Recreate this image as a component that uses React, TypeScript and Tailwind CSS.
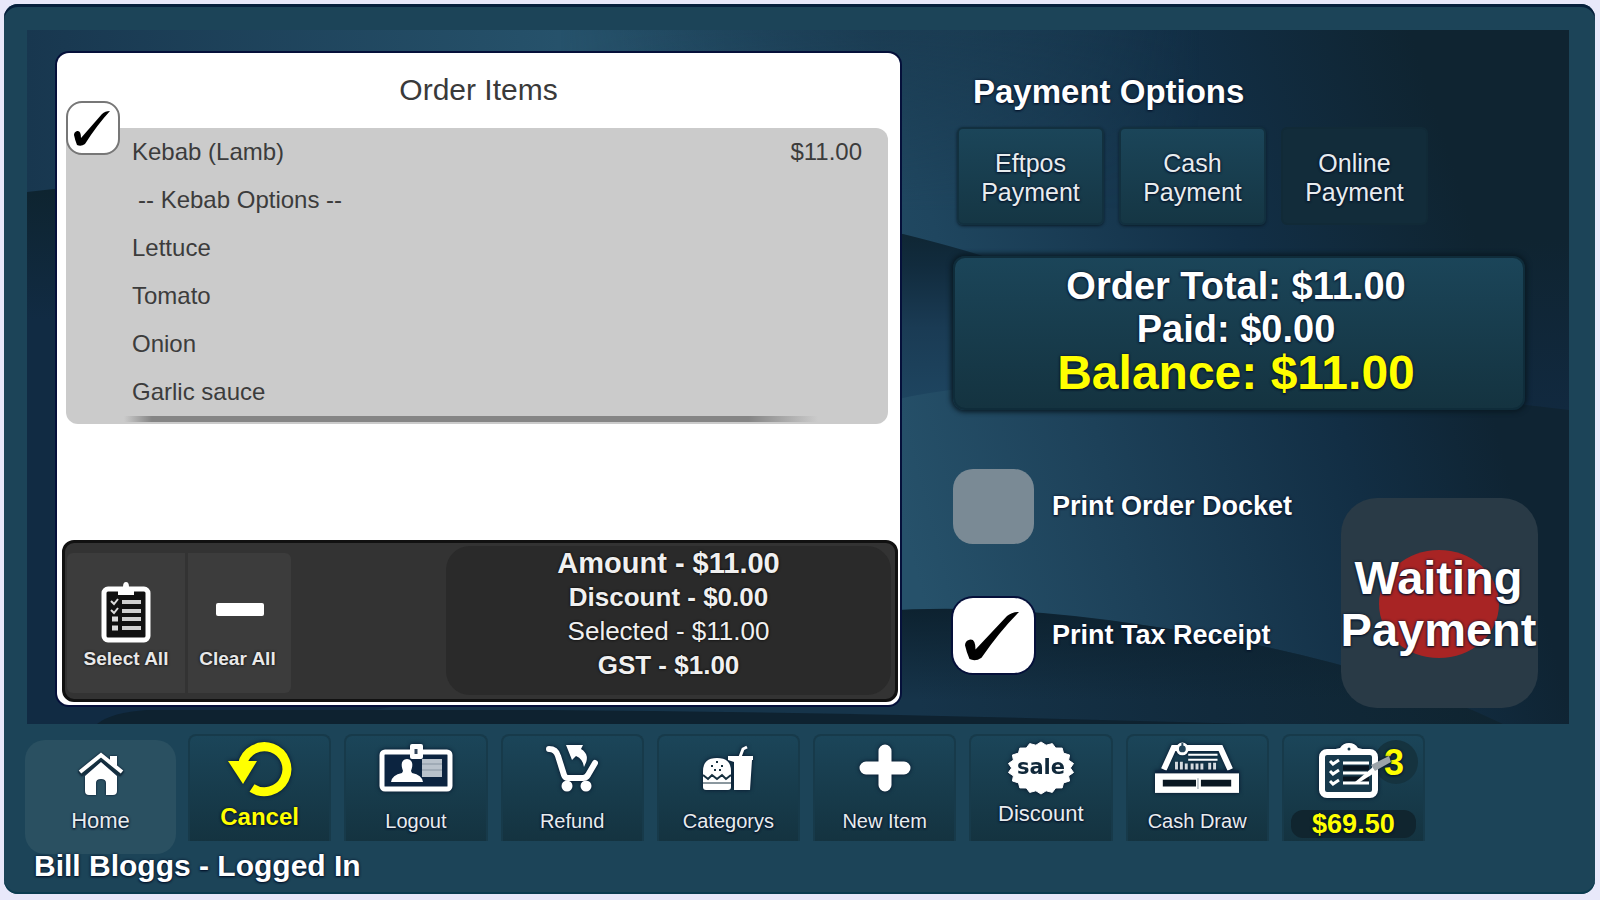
import React, { useState } from 'react';

const TEXT_GLOW = '[text-shadow:0_0_3px_#04122a,0_1px_2px_#04122a]';

const ORDER_ROWS = [
  { id: 'kebab', label: 'Kebab (Lamb)', price: '$11.00' },
  { id: 'options', label: '-- Kebab Options --', heading: true },
  { id: 'lettuce', label: 'Lettuce' },
  { id: 'tomato', label: 'Tomato' },
  { id: 'onion', label: 'Onion' },
  { id: 'garlic', label: 'Garlic sauce' },
];

const PAYMENT_TYPES = [
  { id: 'eftpos', label: 'Eftpos', enabled: true },
  { id: 'cash', label: 'Cash', enabled: true },
  { id: 'online', label: 'Online', enabled: false },
];

/* ---------- Icons ---------- */

const HomeIcon = () => (
  <svg width="46" height="44" viewBox="0 0 46 44" fill="#fff">
    <path d="M32 4h7v12l-7-6z" />
    <path d="M7 24 23 10l16 14v15q0 4-4 4h-7V31q0-4-5-4t-5 4v12h-7q-4 0-4-4z" />
    <path d="M2 22 23 5l21 17" fill="none" stroke="#16303f" strokeWidth="6" />
    <path d="M2 20 23 3l21 17" fill="none" stroke="#fff" strokeWidth="4" />
  </svg>
);

const CancelIcon = () => (
  <svg className="shrink-0" width="64" height="57" viewBox="0 0 64 57">
    <path d="M14.5 24A22.5 22.5 0 1 1 24 48" fill="none" stroke="#ff0" strokeWidth="9" />
    <path d="M0 21h29L15 44z" fill="#ff0" />
  </svg>
);

const LogoutIcon = () => (
  <svg width="74" height="48" viewBox="0 0 74 48">
    <rect x="3" y="8" width="68" height="37" rx="3" fill="#0c2440" stroke="#fff" strokeWidth="5" />
    <path d="M12 38q1-7 11-9l1-2q-4-11 4-12 8 1 4 12l1 2q10 2 11 9z" fill="#fff" />
    <rect x="43" y="15" width="20" height="18" fill="#b9c2cb" />
    <path d="M43 20h20M43 26h20" stroke="#8794a1" strokeWidth="1" />
    <rect x="31" y="0" width="13" height="15" rx="2" fill="#fff" />
    <path d="M37 5v5" stroke="#33465c" strokeWidth="3" />
  </svg>
);

const RefundIcon = () => (
  <svg width="52" height="47" viewBox="0 0 52 47">
    <path
      d="M3 4q7 0 9 7l6 19q1 3 4 3h15q3 0 5-3l7-12"
      fill="none"
      stroke="#fff"
      strokeWidth="6"
      strokeLinecap="round"
    />
    <circle cx="21" cy="41" r="5.5" fill="#fff" />
    <circle cx="40" cy="41" r="5.5" fill="#fff" />
    <path d="M20 0h17l-2 4q10 6 3 18-1-8-8-11l-4 4z" fill="#fff" />
  </svg>
);

const FoodIcon = () => (
  <svg width="52" height="47" viewBox="0 0 52 47">
    <path d="M1 26q0-13 14-13 14 0 14 13v16q0 3-3 3H4q-3 0-3-3z" fill="#fff" />
    <path d="m1 30 5 4 4-4 5 4 5-4 4 4 5-4" fill="none" stroke="#16303f" strokeWidth="2" />
    <path d="M1 38h28" stroke="#16303f" strokeWidth="1" />
    <path d="M9 21h2M14 17h2M19 21h2M12 25h2M17 25h2" stroke="#16303f" strokeWidth="2" />
    <path d="M26 11h25v4h-1l-2 30H32V17l-6-2z" fill="#fff" />
    <path d="M38 12 41 4l4-2" fill="none" stroke="#fff" strokeWidth="3" />
  </svg>
);

const PlusIcon = () => (
  <svg width="52" height="48" viewBox="0 0 52 48">
    <path d="M26 7v34M7 24h38" stroke="#fff" strokeWidth="13" strokeLinecap="round" />
  </svg>
);

const BADGE_POINTS = Array.from({ length: 36 }, (_, i) => {
  const angle = (i * Math.PI) / 18;
  const k = i % 2 ? 0.89 : 1;
  return `${(34 + 33 * k * Math.sin(angle)).toFixed(1)},${(27 - 26 * k * Math.cos(angle)).toFixed(1)}`;
}).join(' ');

const SaleIcon = () => (
  <svg className="shrink-0" width="68" height="54" viewBox="0 0 68 54">
    <polygon points={BADGE_POINTS} fill="#fff" stroke="#fff" strokeLinejoin="round" />
    <text
      x="34"
      y="33"
      textAnchor="middle"
      fontFamily="DejaVu Sans, sans-serif"
      fontWeight="bold"
      fontSize="21"
      fill="#10283a"
    >
      sale
    </text>
  </svg>
);

const DrawerIcon = () => (
  <svg className="shrink-0" width="84" height="52" viewBox="0 0 86 53">
    <path d="M9 28 19 6h48l10 22" fill="none" stroke="#fff" strokeWidth="6" />
    <path d="M34 13h30M34 18h30" stroke="#fff" strokeWidth="2" />
    <path d="M22 28v-8M27 28v-8M32 28v-6M38 28v-6M43 28v-6M48 28v-6M56 28v-7M61 28v-7" stroke="#d5dbe0" strokeWidth="3" />
    <circle cx="28" cy="7" r="5" fill="#24455a" stroke="#fff" strokeWidth="3" />
    <path d="M28 1v8" stroke="#24455a" strokeWidth="2" />
    <rect x="0" y="32" width="86" height="20" fill="#fff" />
    <path d="M0 30h86" stroke="#0c2440" strokeWidth="2" />
    <path d="M8 42h34M47 42h31" stroke="#0a1722" strokeWidth="7" />
    <path d="M44 37v11" stroke="#8794a1" strokeWidth="1" />
  </svg>
);

const OrdersIcon = () => (
  <svg width="72" height="56" viewBox="0 0 72 56">
    <rect x="3" y="9" width="53" height="43" rx="5" fill="#17394c" stroke="#fff" strokeWidth="6" />
    <path d="M11 12q2-6 10-7 3-5 9-5t9 5q8 1 9 7z" fill="#fff" />
    <circle cx="30" cy="6" r="1.5" fill="#17394c" />
    <path d="m11 18 3 3 6-4M11 28l3 3 6-4M11 38l3 3 6-4" fill="none" stroke="#fff" strokeWidth="3" />
    <path d="M24 25h26M24 36h26" stroke="#081420" strokeWidth="5" />
    <path d="M24 20h26M24 30h24M24 40h26" stroke="#fff" strokeWidth="3" />
    <path d="M36 39 54 24l3 5-16 10z" fill="#fff" />
    <path d="m52 22 18-9 2 6-16 9z" fill="#9ba3a9" />
  </svg>
);

const SelectAllIcon = () => (
  <svg width="50" height="62" viewBox="0 0 48 62">
    <rect x="2" y="8" width="44" height="51" rx="4" fill="#111" stroke="#fff" strokeWidth="5" />
    <path d="M16 14V7l5-1q0-5 3-5t3 5l5 1v7z" fill="#fff" />
    <path d="M20 21h19M20 30h19M20 38h19M20 47h19" stroke="#cfcfcf" strokeWidth="4" />
    <path d="m9 20 3 3 4-5M9 29l3 3 4-5" fill="none" stroke="#ddd" strokeWidth="2" />
    <path d="M10 38h6M10 47h6" stroke="#ddd" strokeWidth="5" />
  </svg>
);

const ClearAllIcon = () => (
  <svg className="ml-1" width="50" height="62" viewBox="0 0 50 62">
    <rect x="1" y="22" width="48" height="13" rx="2" fill="#fff" />
  </svg>
);

/* ---------- Wavy stage background ---------- */

const StageBackdrop = () => (
  <svg
    className="absolute inset-0 w-full h-full"
    viewBox="27 30 1542 694"
    preserveAspectRatio="none"
    aria-hidden="true"
  >
    <defs>
      <linearGradient id="top" gradientUnits="userSpaceOnUse" x1="700" y1="290" x2="1420" y2="60">
        <stop offset="0" stopColor="#26526b" />
        <stop offset="0.32" stopColor="#1f465f" />
        <stop offset="0.7" stopColor="#122f46" />
        <stop offset="1" stopColor="#0f2431" />
      </linearGradient>
      <linearGradient id="topLeft" gradientUnits="userSpaceOnUse" x1="27" y1="0" x2="560" y2="0">
        <stop offset="0" stopColor="#18374f" />
        <stop offset="1" stopColor="#18374f" stopOpacity="0" />
      </linearGradient>
      <linearGradient id="topMid" gradientUnits="userSpaceOnUse" x1="560" y1="0" x2="1200" y2="0">
        <stop offset="0" stopColor="#1a3a50" stopOpacity="0" />
        <stop offset="0.5" stopColor="#1a3a50" stopOpacity="0.8" />
        <stop offset="1" stopColor="#1a3a50" stopOpacity="0" />
      </linearGradient>
      <linearGradient id="fadeDown" gradientUnits="userSpaceOnUse" x1="0" y1="30" x2="0" y2="210">
        <stop offset="0" stopColor="#fff" />
        <stop offset="1" stopColor="#000" />
      </linearGradient>
      <mask id="topFade">
        <rect x="27" y="30" width="1542" height="694" fill="url(#fadeDown)" />
      </mask>
      <linearGradient id="mid" gradientUnits="userSpaceOnUse" x1="0" y1="220" x2="0" y2="400">
        <stop offset="0" stopColor="#0e2430" />
        <stop offset="0.25" stopColor="#112b3d" />
        <stop offset="0.6" stopColor="#1a3b54" />
        <stop offset="1" stopColor="#1e4560" />
      </linearGradient>
      <linearGradient id="leftEdge" gradientUnits="userSpaceOnUse" x1="0" y1="190" x2="0" y2="320">
        <stop offset="0" stopColor="#0e2430" />
        <stop offset="1" stopColor="#112b43" />
      </linearGradient>
      <linearGradient id="rightEdge" gradientUnits="userSpaceOnUse" x1="0" y1="240" x2="0" y2="410">
        <stop offset="0" stopColor="#0f2431" />
        <stop offset="1" stopColor="#11293f" />
      </linearGradient>
      <linearGradient id="low" gradientUnits="userSpaceOnUse" x1="920" y1="590" x2="1500" y2="440">
        <stop offset="0" stopColor="#26516a" />
        <stop offset="0.35" stopColor="#1d4159" />
        <stop offset="0.75" stopColor="#122e44" />
        <stop offset="1" stopColor="#0f2433" />
      </linearGradient>
      <linearGradient id="bottom" gradientUnits="userSpaceOnUse" x1="920" y1="720" x2="1500" y2="660">
        <stop offset="0" stopColor="#16344a" />
        <stop offset="0.5" stopColor="#112a3c" />
        <stop offset="1" stopColor="#0f2430" />
      </linearGradient>
      <linearGradient id="bottomEdge" gradientUnits="userSpaceOnUse" x1="0" y1="610" x2="0" y2="700">
        <stop offset="0" stopColor="#0d2230" />
        <stop offset="1" stopColor="#0d2230" stopOpacity="0" />
      </linearGradient>
    </defs>
    <rect x="27" y="30" width="1542" height="694" fill="url(#top)" />
    <rect x="27" y="30" width="700" height="200" fill="url(#topLeft)" />
    <rect x="560" y="30" width="640" height="200" fill="url(#topMid)" mask="url(#topFade)" />
    <path d="M500 190 903 234q60 15 92 26h485v464H500z" fill="url(#mid)" />
    <path d="M27 192Q300 160 527 200v524H27z" fill="url(#leftEdge)" />
    <path d="M1480 240h89v250h-89z" fill="url(#rightEdge)" />
    <path d="M500 724V480q260-60 403-82 80-18 250-16 240 6 416 28v314z" fill="url(#low)" />
    <path d="M300 724 903 611q100-6 240 14 130 18 250 55 60 20 110 44z" fill="url(#bottom)" />
    <path d="M880 724V611q120-8 263 14 130 18 250 55 60 20 110 44z" fill="url(#bottomEdge)" />
    <path d="M97 724q15-12 50-14h400q300 2 700 14z" fill="#0e2230" />
  </svg>
);

/* ---------- Controls ---------- */

interface TickBoxProps {
  id: string;
  checked: boolean;
  onChange: () => void;
  className: string;
  label?: string;
}

const TickBox: React.FC<TickBoxProps> = ({ id, checked, onChange, className, label }) => (
  <span className="relative block shrink-0">
    <input
      id={id}
      type="checkbox"
      aria-label={label}
      checked={checked}
      onChange={onChange}
      className={`block appearance-none cursor-pointer bg-[#7a8a95] checked:bg-white ${className}`}
    />
    {checked && (
      <svg
        className="absolute inset-0 w-full h-full pointer-events-none"
        viewBox="0 0 54 54"
        preserveAspectRatio="none"
      >
        <path d="M8 34q0-3 3-4 4-1 4 7l21-24q3-3 8-3Q31 24 19 43q-4 3-8 1-2-5-3-10z" fill="#000" />
      </svg>
    )}
  </span>
);

interface NavTileProps {
  label: string;
  icon: React.ReactNode;
  labelClass?: string;
}

const NavTile: React.FC<NavTileProps> = ({ label, icon, labelClass = 'text-[20px] pt-2' }) => (
  <button
    type="button"
    className="h-[107px] pt-2 flex flex-col items-center rounded-t-lg border-2 border-b-0 border-[#173a4a] bg-gradient-to-b from-[#1b4559] to-[#143340] text-[#e8ecef]"
  >
    <span className="h-[48px] flex items-center [filter:drop-shadow(0_0_2px_#04122a)]">{icon}</span>
    <span className={`flex-1 flex items-center whitespace-nowrap ${TEXT_GLOW} ${labelClass}`}>{label}</span>
  </button>
);

const OrderPanel: React.FC = () => {
  const [selected, setSelected] = useState(true);

  return (
    <section className="mb-[3px] flex flex-col rounded-xl bg-white shadow-[0_0_0_2px_#05103a]">
      <h2 className="pt-[19px] pb-5 text-center text-[30px] leading-[36px] text-[#3a3a3a]">Order Items</h2>

      <div className="relative ml-[9px] mr-3 pb-[2px] rounded-xl bg-[#cbcbcb] text-2xl text-[#3c3c3c]">
        <div className="absolute left-0 -top-[27px]">
          <TickBox
            id="order-selected"
            label="Kebab (Lamb)"
            checked={selected}
            onChange={() => setSelected(!selected)}
            className="w-[54px] h-[54px] rounded-2xl border-2 border-[#777]"
          />
        </div>
        <ul>
          {ORDER_ROWS.map((row) => (
            <li
              key={row.id}
              className={`h-12 pr-[26px] flex items-center justify-between ${row.heading ? 'pl-[72px]' : 'pl-[66px]'}`}
            >
              <span>{row.label}</span>
              {row.price && <span>{row.price}</span>}
            </li>
          ))}
        </ul>
        <div className="ml-[58px] mr-[70px] h-[6px] bg-[linear-gradient(to_right,transparent,#858585_4%,#858585_90%,transparent)]" />
      </div>

      <div className="flex-1" />

      <div className="ml-[5px] mr-[2px] mb-[3px] pl-[2px] pr-1 flex rounded-xl border-[3px] border-[#111] bg-[#333] text-white">
        <button
          type="button"
          className="mt-[10px] mb-[6px] w-[118px] pb-[22px] flex flex-col items-center justify-end bg-[#3c3c3c] rounded-l-md"
        >
          <SelectAllIcon />
          <span className="mt-1 h-6 leading-6 text-[19px] font-bold text-[#e8e8e8] [text-shadow:0_0_3px_#000]">Select All</span>
        </button>
        <button
          type="button"
          className="mt-[10px] mb-[6px] ml-[3px] w-[103px] pb-[22px] pr-1 flex flex-col items-center justify-end bg-[#3c3c3c] rounded-r-md"
        >
          <ClearAllIcon />
          <span className="mt-1 h-6 leading-6 text-[19px] font-bold text-[#e8e8e8] [text-shadow:0_0_3px_#000]">Clear All</span>
        </button>
        <div className="mt-[3px] mb-1 ml-auto w-[54%] pb-[13px] rounded-3xl bg-[#2a2a2a] text-center leading-[34px] text-[26px] font-bold text-[#f0f0f0] [text-shadow:0_0_3px_#000]">
          <p className="text-[29px]">Amount - $11.00</p>
          <p>Discount - $0.00</p>
          <p className="font-normal">Selected - $11.00</p>
          <p>GST - $1.00</p>
        </div>
      </div>
    </section>
  );
};

const PaymentPanel: React.FC = () => {
  const [printDocket, setPrintDocket] = useState(false);
  const [printReceipt, setPrintReceipt] = useState(true);

  return (
    <section className={`text-white ${TEXT_GLOW}`}>
      <h2 className="mt-[21px] ml-5 text-[33px] leading-[36px] font-bold">Payment Options</h2>

      <div className="mt-[17px] ml-1 flex gap-[15px]">
        {PAYMENT_TYPES.map((type) => (
          <button
            key={type.id}
            type="button"
            className={`w-[147px] h-[98px] pt-1 rounded-md border-2 text-[25px] leading-[29px] text-[#e8ecef] ${
              type.enabled
                ? 'border-[#12303f] bg-gradient-to-b from-[#1b4559] to-[#153644] shadow-[0_1px_3px_#0a1c28]'
                : 'border-[#112a37] bg-[#122c3a]'
            }`}
          >
            <span className={TEXT_GLOW}>
              {type.label}
              <br />
              Payment
            </span>
          </button>
        ))}
      </div>

      <div className="mt-[31px] mr-[13px] h-[154px] pt-[7px] pr-[6px] rounded-xl border-2 border-[#0f2c3a] bg-gradient-to-b from-[#1b4559] to-[#143340] shadow-[0_0_5px_2px_#091923] text-center text-[38px] leading-[43px] font-bold">
        <p>Order Total: $11.00</p>
        <p>Paid: $0.00</p>
        <p className="text-[48px] text-[#ff0]">Balance: $11.00</p>
      </div>

      <div className="flex justify-between">
        <div className="pt-[59px] text-[27px] font-bold">
          <div className="flex items-center gap-[18px]">
            <TickBox
              id="print-docket"
              checked={printDocket}
              onChange={() => setPrintDocket(!printDocket)}
              className="w-[81px] h-[75px] rounded-[20px]"
            />
            <label htmlFor="print-docket">Print Order Docket</label>
          </div>
          <div className="mt-[54px] flex items-center gap-[18px]">
            <TickBox
              id="print-receipt"
              checked={printReceipt}
              onChange={() => setPrintReceipt(!printReceipt)}
              className="w-[81px] h-[75px] rounded-[20px] shadow-[0_0_0_2px_#05103a]"
            />
            <label htmlFor="print-receipt">Print Tax Receipt</label>
          </div>
        </div>

        <button
          type="button"
          className="mt-[88px] w-[197px] h-[210px] pt-[2px] pr-[2px] flex items-center justify-center rounded-[36px] bg-[#293a46]"
        >
          <span className="w-[120px] h-[108px] rounded-[50%] bg-[#a82424] flex items-center justify-center">
            <span className={`shrink-0 text-[47px] leading-[52px] font-bold ${TEXT_GLOW}`}>
              Waiting
              <br />
              Payment
            </span>
          </span>
        </button>
      </div>
    </section>
  );
};

const BottomNav: React.FC = () => (
  <nav className="pt-[10px] pl-[21px] pr-[170px] flex items-start gap-3">
    <button
      type="button"
      className="mt-[6px] w-[151px] h-[114px] pt-3 flex flex-col items-center rounded-[20px] bg-[#2a5061] text-[#e8ecef]"
    >
      <span className="[filter:drop-shadow(0_0_1px_#04122a)]"><HomeIcon /></span>
      <span className={`mt-3 text-[22px] leading-[26px] ${TEXT_GLOW}`}>Home</span>
    </button>

    <div className="flex-1 grid grid-cols-8 gap-[13px]">
      <NavTile label="Cancel" icon={<CancelIcon />} labelClass="text-2xl font-bold text-[#ff0]" />
      <NavTile label="Logout" icon={<LogoutIcon />} />
      <NavTile label="Refund" icon={<RefundIcon />} />
      <NavTile label="Categorys" icon={<FoodIcon />} />
      <NavTile label="New Item" icon={<PlusIcon />} />
      <NavTile label="Discount" icon={<SaleIcon />} labelClass="text-[22px] pb-[6px]" />
      <NavTile label="Cash Draw" icon={<DrawerIcon />} />

      <button
        type="button"
        className="relative h-[107px] pt-[7px] px-[7px] flex flex-col rounded-t-lg border-2 border-b-0 border-[#173a4a] bg-gradient-to-b from-[#1b4559] to-[#143340] text-[#ff0] font-bold"
      >
        <span className="absolute top-[4px] right-[5px] w-11 h-11 pr-1 rounded-full bg-[#15333f] text-center text-[36px] leading-[46px]">
          <span className={TEXT_GLOW}>3</span>
        </span>
        <span className="relative ml-[28px] [filter:drop-shadow(0_0_2px_#04122a)]"><OrdersIcon /></span>
        <span className={`mt-[11px] w-full h-7 rounded-xl bg-[#10252f] text-[27px] leading-7 ${TEXT_GLOW}`}>$69.50</span>
      </button>
    </div>
  </nav>
);

const App: React.FC = () => (
  <div className="min-h-screen pt-1 pl-1 pr-[5px] pb-[6px] flex bg-[#e8e8fa] font-['Liberation_Sans',Arial,sans-serif]">
    <div className="flex-1 flex flex-col rounded-[14px] bg-[#1c4458] shadow-[inset_0_3px_0_#06203c,inset_0_-2px_0_#0b3c50]">
      <main className="relative flex-1 mt-[26px] ml-[23px] mr-[26px] flex">
        <StageBackdrop />
        <div className="relative flex-1 pt-[23px] pb-4 pl-[30px] pr-[31px] grid grid-cols-[843fr_585fr] gap-x-[53px]">
          <OrderPanel />
          <PaymentPanel />
        </div>
      </main>
      <BottomNav />
      <footer className={`pl-[30px] pb-4 text-[30px] leading-[24px] font-bold text-white ${TEXT_GLOW}`}>
        Bill Bloggs - Logged In
      </footer>
    </div>
  </div>
);

export default App;
